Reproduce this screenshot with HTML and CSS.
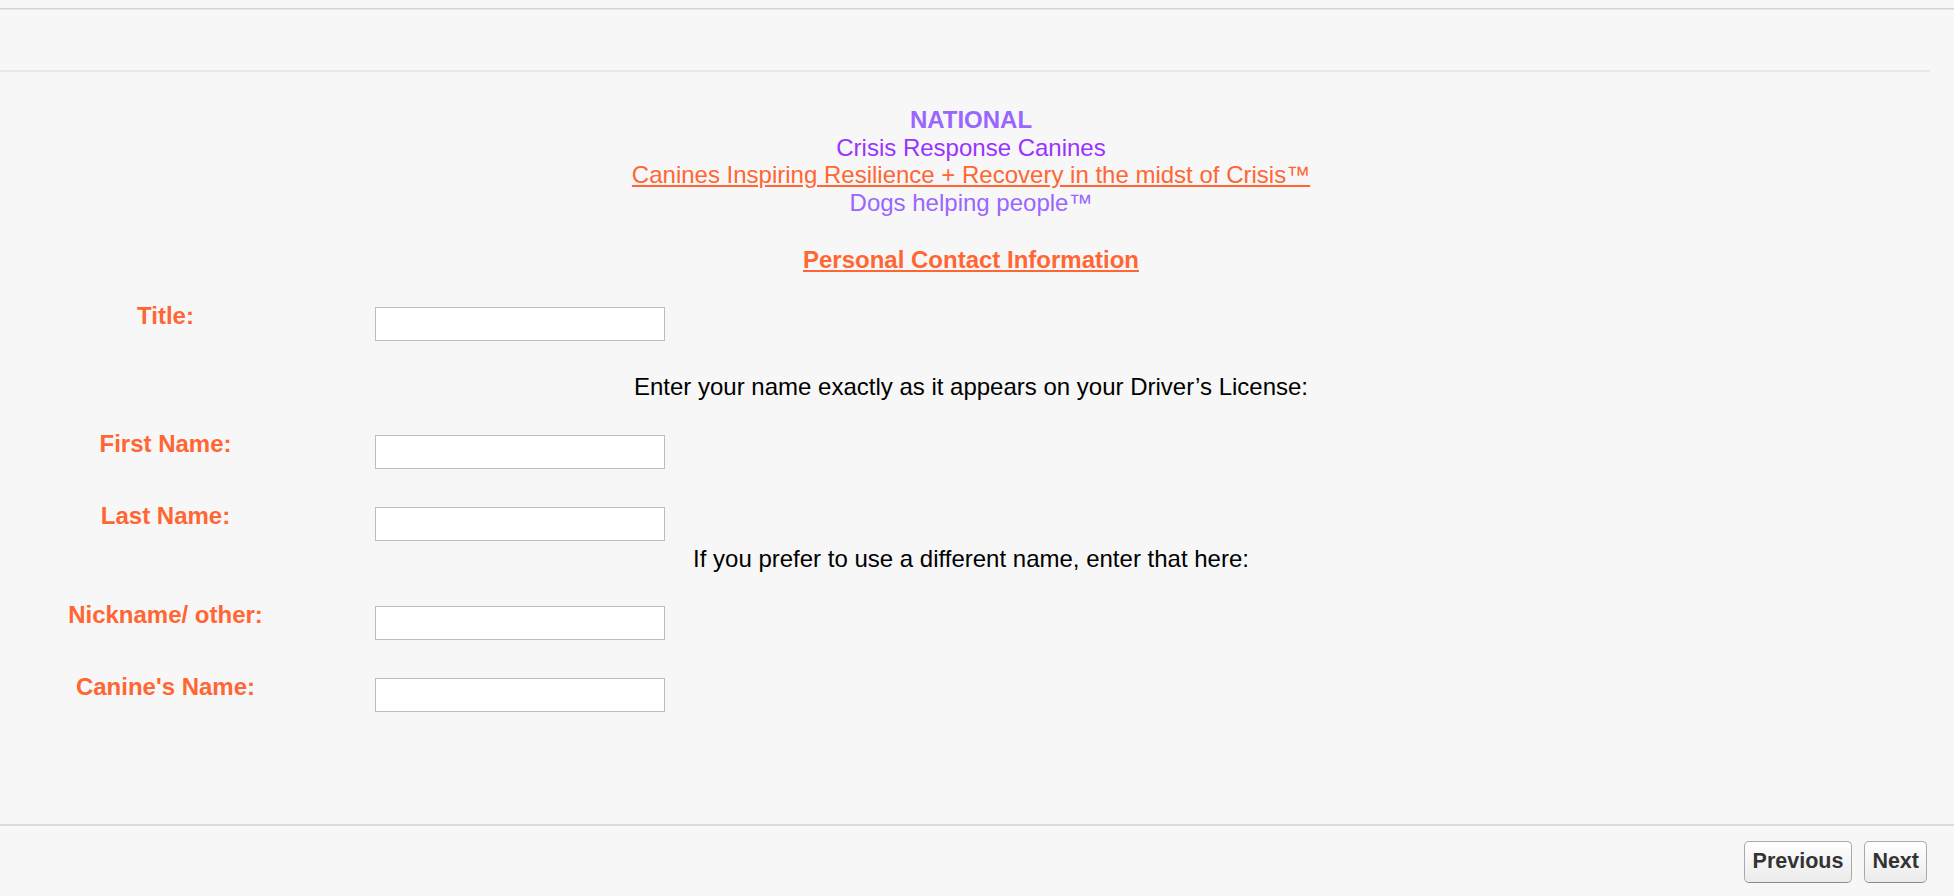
FILE: index.html
```html
<!DOCTYPE html>
<html lang="en">
<head>
<meta charset="utf-8">
<title>Personal Contact Information</title>
<link rel="stylesheet" href="styles.css">
</head>
<body>
<div class="topline"></div>
<div class="header"></div>
<main class="main">
  <div class="brand">
    <div class="brand-national">NATIONAL</div>
    <div class="brand-name">Crisis Response Canines</div>
    <div class="brand-tag"><u>Canines Inspiring Resilience + Recovery in the midst of Crisis™</u></div>
    <div class="brand-dogs">Dogs helping people™</div>
  </div>
  <h2 class="section-title">Personal Contact Information</h2>
  <form class="form">
    <div class="row row-first">
      <label class="label" for="title">Title:</label>
      <input class="field" id="title" type="text">
    </div>
    <p class="note">Enter your name exactly as it appears on your Driver’s License:</p>
    <div class="row">
      <label class="label" for="first">First Name:</label>
      <input class="field" id="first" type="text">
    </div>
    <div class="row row-tight">
      <label class="label" for="last">Last Name:</label>
      <input class="field" id="last" type="text">
    </div>
    <p class="note">If you prefer to use a different name, enter that here:</p>
    <div class="row">
      <label class="label" for="nick">Nickname/ other:</label>
      <input class="field" id="nick" type="text">
    </div>
    <div class="row row-last">
      <label class="label" for="canine">Canine's Name:</label>
      <input class="field" id="canine" type="text">
    </div>
  </form>
</main>
<footer class="footer">
  <button class="btn btn-prev" type="button">Previous</button>
  <button class="btn" type="button">Next</button>
</footer>
</body>
</html>
```
FILE: styles.css
```css
html, body {
  margin: 0;
  padding: 0;
  height: 100%;
  overflow: hidden;
}
body {
  background: #f7f7f7;
  font-family: "Liberation Sans", Arial, Helvetica, sans-serif;
  font-size: 24px;
  line-height: 27.6px;
  color: #000;
}
.topline {
  height: 8px;
  border-bottom: 1px solid #d3d3d3;
  box-shadow: 0 1px 0 #e6e6e6;
}
.header {
  height: 60px;
  margin-top: 1px;
  margin-right: 24px;
  border-bottom: 2px solid #e8e8e8;
}
.main {
  width: 1942px;
  padding-top: 34px;
  padding-bottom: 112px;
}
.brand {
  text-align: center;
}
.brand-national {
  font-weight: bold;
  color: #9966ff;
}
.brand-name {
  color: #9933ff;
}
.brand-tag {
  color: #ff6633;
}
.brand-dogs {
  color: #9966ff;
}
.section-title {
  margin: 29.5px 0 0;
  font-size: 24px;
  font-weight: bold;
  line-height: 27.6px;
  text-align: center;
  color: #ff6633;
  text-decoration: underline;
}
.form {
  margin: 29px 0 0;
  display: flex;
  flex-direction: column;
}
.row {
  display: flex;
  align-items: flex-start;
  margin-bottom: 33px;
}
.row-first {
  margin-bottom: 32px;
}
.row-tight {
  margin-bottom: 4.5px;
}
.row-last {
  margin-bottom: 0;
}
.label {
  width: 331px;
  margin-right: 44px;
  text-align: center;
  font-weight: bold;
  color: #ff6633;
}
.field {
  box-sizing: border-box;
  width: 290px;
  height: 34px;
  margin: 5px 0 0;
  padding: 2px 4px;
  border: 1px solid #bdbdbd;
  border-radius: 0;
  background: #fff;
  font-family: inherit;
  font-size: 16px;
}
.note {
  margin: 0 0 28.5px;
  text-align: center;
}
.footer {
  border-top: 2px solid #dcdcdc;
  display: flex;
  justify-content: flex-end;
  gap: 12px;
  padding: 15px 27px 0 0;
}
.btn {
  box-sizing: border-box;
  height: 42px;
  padding: 0 7px;
  border: 1px solid #a9a9a9;
  border-bottom-color: #8a8a8a;
  border-radius: 5px;
  background: linear-gradient(#ffffff, #ebebeb);
  font-family: "Liberation Sans", Arial, Helvetica, sans-serif;
  font-size: 21.5px;
  font-weight: bold;
  color: #333;
  line-height: 1;
}
.btn-prev {
  padding: 0 8px;
}
```
